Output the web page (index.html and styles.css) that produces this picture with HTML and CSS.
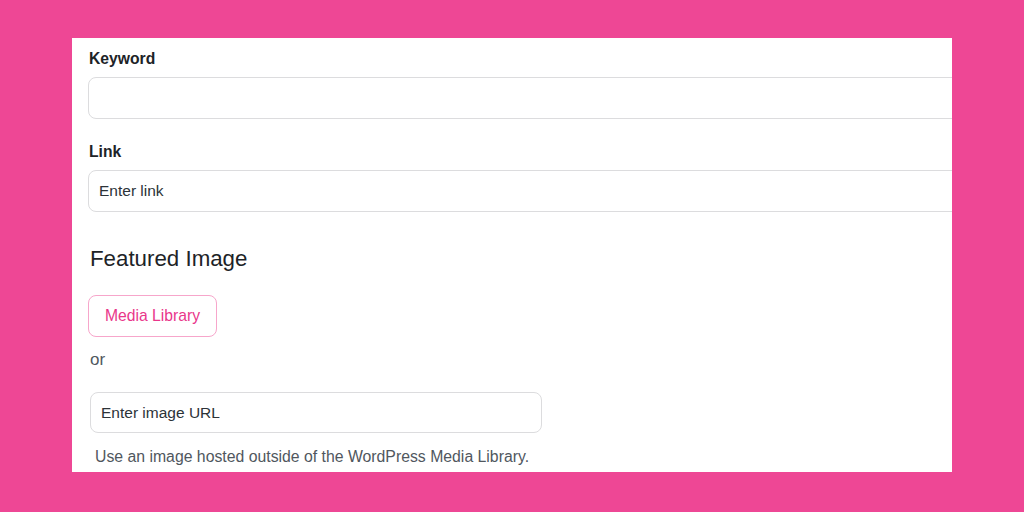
FILE: index.html
```html
<!DOCTYPE html>
<html>
<head>
<meta charset="utf-8">
<link rel="stylesheet" href="styles.css">
</head>
<body>
<div class="panel">
  <div class="field">
    <label class="label">Keyword</label>
    <div class="input wide"></div>
  </div>
  <div class="field link-field">
    <label class="label">Link</label>
    <div class="input wide">Enter link</div>
  </div>
  <h2 class="heading">Featured Image</h2>
  <div class="button">Media Library</div>
  <div class="or">or</div>
  <div class="input url">Enter image URL</div>
  <p class="help">Use an image hosted outside of the WordPress Media Library.</p>
</div>
</body>
</html>
```
FILE: styles.css
```css
html, body {
  margin: 0;
  padding: 0;
}
body {
  background: #ee4795;
  width: 1024px;
  height: 512px;
  overflow: hidden;
  font-family: "Liberation Sans", Arial, sans-serif;
  color: #1d2327;
}
.panel {
  box-sizing: border-box;
  margin: 38px 0 0 72px;
  width: 880px;
  height: 434px;
  background: #fff;
  overflow: hidden;
  padding: 12px 0 0 16px;
  display: flex;
  flex-direction: column;
  align-items: flex-start;
}
.field {
  display: flex;
  flex-direction: column;
  gap: 9px;
}
.link-field {
  margin-top: 24px;
}
.label {
  display: block;
  font-size: 15.7px;
  line-height: 18px;
  font-weight: bold;
  padding-left: 1px;
}
.input {
  box-sizing: border-box;
  height: 42px;
  border: 1px solid #dcdcde;
  border-radius: 8px;
  background: #fff;
  font-size: 15.5px;
  line-height: 40px;
  padding: 0 10px;
  color: #2c3338;
}
.wide {
  width: 920px;
}
.heading {
  margin: 34px 0 0 2px;
  font-size: 22.3px;
  line-height: 26px;
  font-weight: normal;
}
.button {
  box-sizing: border-box;
  margin-top: 23px;
  width: 129px;
  height: 42px;
  border: 1px solid #f7a6cb;
  border-radius: 8px;
  color: #e9368a;
  font-size: 15.7px;
  line-height: 40px;
  text-align: center;
}
.or {
  margin: 14px 0 0 2px;
  font-size: 17px;
  line-height: 18px;
  color: #50575e;
}
.url {
  margin: 23px 0 0 2px;
  width: 452px;
  height: 41px;
  line-height: 39px;
}
.help {
  margin: 15px 0 0 7px;
  font-size: 15.8px;
  line-height: 18px;
  color: #50575e;
}
```
